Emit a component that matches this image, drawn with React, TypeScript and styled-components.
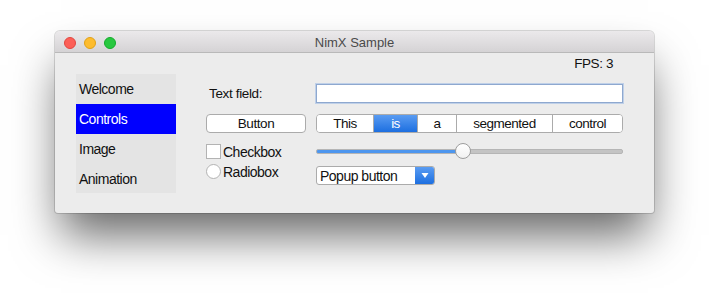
import React from "react";
import styled, { createGlobalStyle } from "styled-components";

const Global = createGlobalStyle`
  html, body { margin: 0; padding: 0; background: #ffffff; }
  body { font-family: "Liberation Sans", Arial, sans-serif; font-size: 13px; color: #111; }
  * { box-sizing: border-box; }
`;

const Page = styled.div`
  width: 709px;
  height: 293px;
  padding: 31px 0 0 55px;
`;

const Window = styled.div`
  width: 599px;
  height: 182px;
  background: #ececec;
  border-radius: 5px 5px 3px 3px;
  box-shadow: 0 0 0 1px rgba(0, 0, 0, 0.14), 0 28px 44px -6px rgba(0, 0, 0, 0.6);
  display: flex;
  flex-direction: column;
  overflow: hidden;
`;

const TitleBar = styled.div`
  height: 22px;
  flex: 0 0 22px;
  background: linear-gradient(#ebe9eb, #d5d3d5);
  border-bottom: 1px solid #b9b9b9;
  display: flex;
  align-items: center;
  position: relative;
  padding: 2px 0 0 9px;
  gap: 8px;
`;

const Light = styled.span<{ $c: string; $b: string }>`
  width: 12px;
  height: 12px;
  border-radius: 50%;
  background: ${(p) => p.$c};
  border: 1px solid ${(p) => p.$b};
`;

const Title = styled.div`
  position: absolute;
  left: 0;
  right: 0;
  top: 2px;
  bottom: 0;
  display: flex;
  align-items: center;
  justify-content: center;
  font-size: 13px;
  color: #4a4a4a;
  pointer-events: none;
`;

const Body = styled.div`
  flex: 1;
  display: flex;
  flex-direction: column;
`;

const FpsRow = styled.div`
  height: 21px;
  display: flex;
  justify-content: flex-end;
  align-items: center;
  padding: 0 41px 0 0;
  font-size: 13.5px;
  letter-spacing: -0.4px;
`;

const Main = styled.div`
  display: flex;
  padding-left: 21px;
`;

const Sidebar = styled.div`
  width: 100px;
  height: 119px;
  background: #e4e4e4;
  display: flex;
  flex-direction: column;
`;

const SideItem = styled.div<{ $sel?: boolean }>`
  height: 30px;
  flex: 0 0 30px;
  display: flex;
  align-items: center;
  padding-left: 3px;
  font-size: 14px;
  letter-spacing: -0.5px;
  background: ${(p) => (p.$sel ? "#0000ff" : "transparent")};
  color: ${(p) => (p.$sel ? "#ffffff" : "#111")};
`;

const Controls = styled.div`
  margin-left: 30px;
  padding-top: 10px;
  display: flex;
  flex-direction: column;
`;

const Row = styled.div<{ $top: number; $h: number }>`
  margin-top: ${(p) => p.$top}px;
  height: ${(p) => p.$h}px;
  display: grid;
  grid-template-columns: 100px 307px;
  column-gap: 10px;
  align-items: center;
`;

const Label = styled.div`
  padding-left: 3px;
  font-size: 13.5px;
  letter-spacing: -0.35px;
`;

const TextField = styled.div`
  height: 19px;
  background: #fff;
  border: 1px solid #8ea8cf;
  box-shadow: 0 0 0 1px #bfd0e8;
`;

const Button = styled.div`
  height: 19px;
  background: #fff;
  border: 1px solid #ababab;
  border-radius: 4px;
  display: flex;
  align-items: center;
  justify-content: center;
  font-size: 13.5px;
  letter-spacing: -0.4px;
`;

const Segmented = styled.div`
  height: 19px;
  display: flex;
  border: 1px solid #ababab;
  border-radius: 4px;
  background: #fff;
  overflow: hidden;
`;

const Segment = styled.div<{ $w: number; $sel?: boolean }>`
  width: ${(p) => p.$w}px;
  flex: 0 0 auto;
  display: flex;
  align-items: center;
  justify-content: center;
  font-size: 13.5px;
  letter-spacing: -0.5px;
  border-left: 1px solid #ababab;
  &:first-child { border-left: none; }
  background: ${(p) => (p.$sel ? "linear-gradient(#5a9cf2, #1d6fe0)" : "#fff")};
  color: ${(p) => (p.$sel ? "#fff" : "#111")};
  &:last-child { flex: 1; }
`;

const CheckRow = styled.div`
  height: 15px;
  display: flex;
  align-items: center;
  gap: 2px;
  font-size: 14px;
  letter-spacing: -0.5px;
`;

const Box = styled.span<{ $round?: boolean }>`
  width: 15px;
  height: 15px;
  flex: 0 0 15px;
  background: #fff;
  border: 1px solid #b3b3b3;
  border-radius: ${(p) => (p.$round ? "50%" : "0")};
`;

const Slider = styled.div`
  position: relative;
  height: 15px;
  display: flex;
  align-items: center;
`;

const Track = styled.div`
  width: 100%;
  height: 5px;
  border-radius: 2px;
  background: #c4c4c4;
  border: 1px solid #b5b5b5;
  overflow: hidden;
`;

const Fill = styled.div`
  height: 100%;
  background: #4d96ee;
`;

const Thumb = styled.div`
  position: absolute;
  top: -1px;
  width: 16px;
  height: 16px;
  margin-left: -8px;
  border-radius: 50%;
  background: linear-gradient(#ffffff, #f1f1f1);
  border: 1px solid #9d9d9d;
`;

const Popup = styled.div`
  margin-top: 2px;
  width: 119px;
  height: 19px;
  display: flex;
  background: #fff;
  border: 1px solid #ababab;
  border-radius: 3px;
  overflow: hidden;
`;

const PopupText = styled.div`
  flex: 1;
  display: flex;
  align-items: center;
  padding-left: 3px;
  font-size: 14px;
  letter-spacing: -0.5px;
`;

const PopupArrow = styled.div`
  width: 19px;
  background: linear-gradient(#5a9cf2, #1d6fe0);
  display: flex;
  align-items: center;
  justify-content: center;
`;

const TopRow = styled(Row)`
  align-items: start;
`;

export default function App() {
  const value = 0.48;
  return (
    <>
      <Global />
      <Page>
        <Window>
          <TitleBar>
            <Light $c="#fc5f57" $b="#e2463f" />
            <Light $c="#fdbc2e" $b="#e1a116" />
            <Light $c="#28c840" $b="#14ac2b" />
            <Title>NimX Sample</Title>
          </TitleBar>
          <Body>
            <FpsRow>FPS: 3</FpsRow>
            <Main>
              <Sidebar>
                <SideItem>Welcome</SideItem>
                <SideItem $sel>Controls</SideItem>
                <SideItem>Image</SideItem>
                <SideItem>Animation</SideItem>
              </Sidebar>
              <Controls>
                <Row $top={0} $h={19}>
                  <Label>Text field:</Label>
                  <TextField />
                </Row>
                <Row $top={11} $h={19}>
                  <Button>Button</Button>
                  <Segmented>
                    <Segment $w={56}>This</Segment>
                    <Segment $w={44} $sel>is</Segment>
                    <Segment $w={39}>a</Segment>
                    <Segment $w={96}>segmented</Segment>
                    <Segment $w={70}>control</Segment>
                  </Segmented>
                </Row>
                <Row $top={11} $h={15}>
                  <CheckRow>
                    <Box />
                    Checkbox
                  </CheckRow>
                  <Slider>
                    <Track>
                      <Fill style={{ width: `${value * 100}%` }} />
                    </Track>
                    <Thumb style={{ left: `${value * 100}%` }} />
                  </Slider>
                </Row>
                <TopRow $top={5} $h={21}>
                  <CheckRow>
                    <Box $round />
                    Radiobox
                  </CheckRow>
                  <Popup>
                    <PopupText>Popup button</PopupText>
                    <PopupArrow>
                      <svg width="8" height="7" viewBox="0 0 8 7">
                        <path d="M0.5 1 L7.5 1 L4 6 Z" fill="#fff" />
                      </svg>
                    </PopupArrow>
                  </Popup>
                </TopRow>
              </Controls>
            </Main>
          </Body>
        </Window>
      </Page>
    </>
  );
}
